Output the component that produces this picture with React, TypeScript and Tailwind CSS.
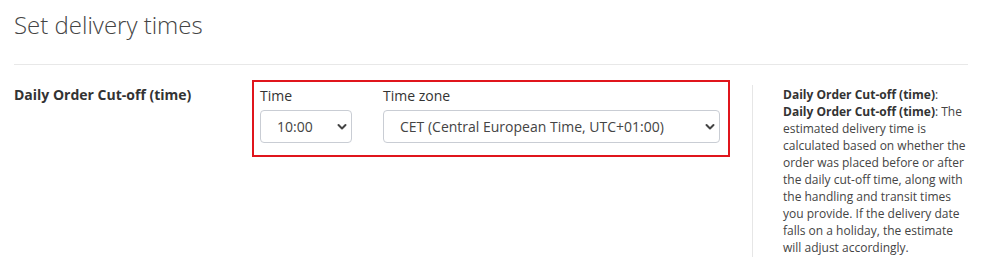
function Chevron() {
  return (
    <svg className="absolute right-[4px] top-1/2 -translate-y-1/2" width="10" height="7" viewBox="0 0 10 7" fill="none">
      <path d="M1.5 1.5 L5 5 L8.5 1.5" stroke="#444" strokeWidth="2" strokeLinecap="round" strokeLinejoin="round" />
    </svg>
  );
}

export default function App() {
  return (
    <div className="w-[982px] h-[272px] bg-white text-[#333] font-['Open_Sans',sans-serif] overflow-hidden">
      <div className="pl-[14px] w-[968px]">
        <h1 className="pt-[8px] text-[24px] leading-[34px] font-light text-[#444]">Set delivery times</h1>
        <div className="mt-[22px] border-t border-[#e8e8e8]" />

        <div className="flex pt-[15px]">
          <div className="w-[238px] pt-[5px] text-[14px] leading-[20px] font-bold text-[#333]">
            Daily Order Cut-off (time)
          </div>

          <div className="w-[478px] h-[77px] border-2 border-[#e0151c] px-[6px] pt-[4px] flex gap-[31px]">
            <div className="flex flex-col">
              <label className="text-[14px] leading-[20px] text-[#333]">Time</label>
              <div className="relative mt-[4px] w-[92px] h-[33px] border border-[#c9cdd4] rounded-[4px] flex items-center pl-[16px] text-[14px] text-[#444]">
                10:00
                <Chevron />
              </div>
            </div>
            <div className="flex flex-col">
              <label className="text-[14px] leading-[20px] text-[#333]">Time zone</label>
              <div className="relative mt-[4px] w-[337px] h-[33px] border border-[#c9cdd4] rounded-[4px] flex items-center pl-[16px] text-[14px] text-[#444]">
                CET (Central European Time, UTC+01:00)
                <Chevron />
              </div>
            </div>
          </div>

          <div className="ml-[22px] mt-[5px] h-[172px] border-l border-[#e6e6e6] pl-[30px] pt-[1px] w-[216px]">
            <p className="text-[12px] leading-[17px] text-[#444]">
              <span className="font-bold text-[#333]">Daily Order Cut-off (time)</span>:{' '}
              <span className="font-bold text-[#333]">Daily Order Cut-off (time)</span>: The estimated delivery time is
              calculated based on whether the order was placed before or after the daily cut-off time, along with the
              handling and transit times you provide. If the delivery date falls on a holiday, the estimate will adjust
              accordingly.
            </p>
          </div>
        </div>
      </div>
    </div>
  );
}
